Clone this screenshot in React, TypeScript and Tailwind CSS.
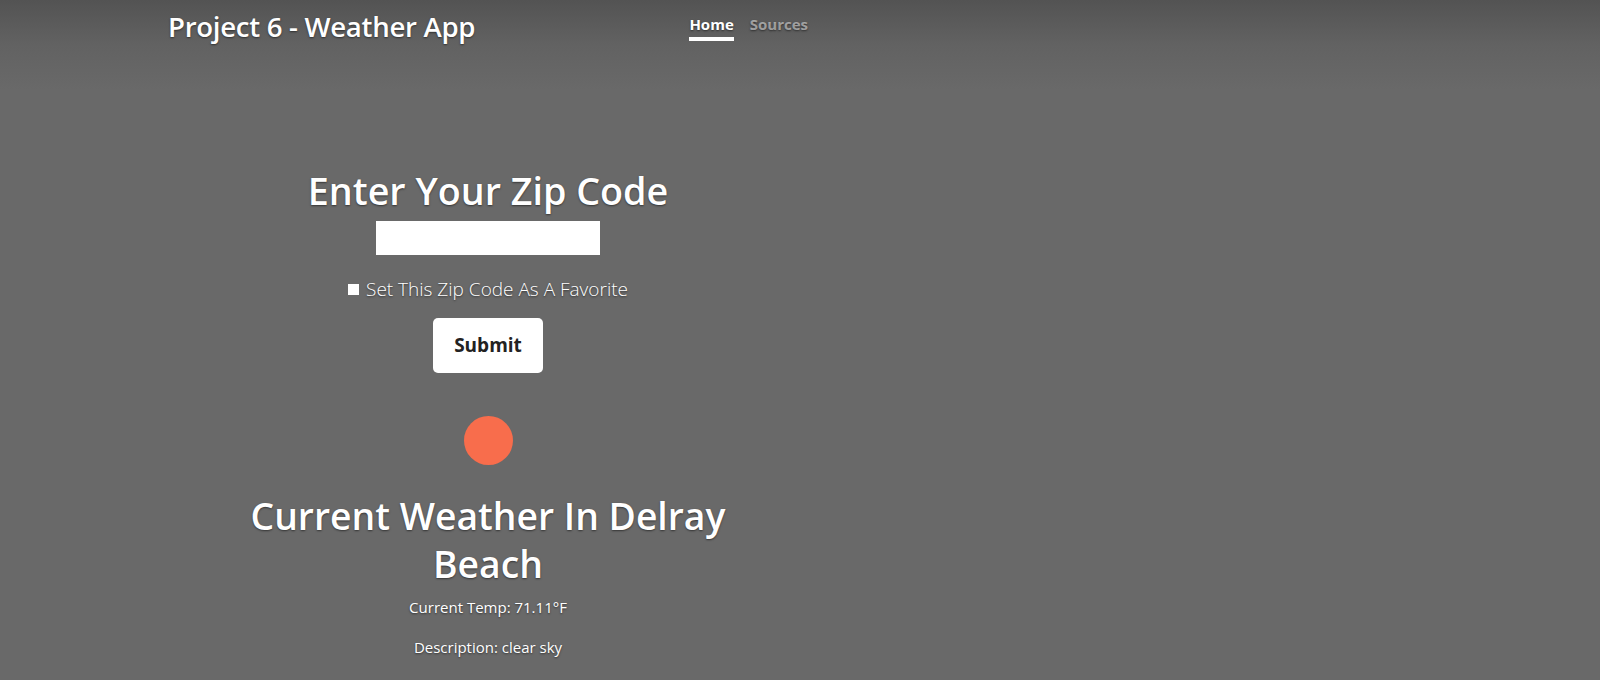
import { useState } from "react"

const shadow = "[text-shadow:0_1px_2px_rgba(0,0,0,0.5)]"

export default function App() {
  const [zip, setZip] = useState("")
  const [favorite, setFavorite] = useState(false)

  return (
    <div
      className={`min-h-screen w-full bg-[#696969] bg-[linear-gradient(to_bottom,#535353_0px,#626262_45px,#696969_90px,#696969_100%)] text-white font-['Open_Sans','Noto_Sans',sans-serif] ${shadow}`}
    >
      <div className="ml-[152px] w-[672px] px-4">
        {/* Masthead */}
        <header className="flex items-start justify-between pt-[9px]">
          <h3 className="text-[27.6px] leading-[34px] font-semibold tracking-[-0.3px]">Project 6 - Weather App</h3>
          <nav className="mt-[2px] flex gap-4 text-[15px] font-bold">
            <a className="border-b-4 border-white py-[2px] leading-[22px] text-white">Home</a>
            <a className="border-b-4 border-transparent py-[2px] leading-[22px] text-white/50">Sources</a>
          </nav>
        </header>

        {/* Main */}
        <main className="mt-[126px] flex flex-col items-center text-center">
          <h2 className="text-[37.7px] leading-[44px] font-semibold">Enter Your Zip Code</h2>
          <input
            value={zip}
            onChange={e => setZip(e.target.value)}
            className="mt-[8px] h-[34px] w-[224px] bg-white text-black outline-none px-2"
          />
          <label className="mt-[20px] flex items-center gap-[7px] text-[19px] leading-[28px] font-light">
            <input
              type="checkbox"
              checked={favorite}
              onChange={e => setFavorite(e.target.checked)}
              className="h-[11px] w-[11px] appearance-none bg-white"
            />
            Set This Zip Code As A Favorite
          </label>
          <button className="mt-[15px] h-[55px] w-[110px] rounded-[5px] bg-white text-[19px] font-bold text-[#222] [text-shadow:none]">
            Submit
          </button>

          <div className="mt-[43px] h-[49px] w-[49px] rounded-full bg-[#f86d4c]" />

          <h1 className="mt-[27px] max-w-[520px] text-[37.3px] leading-[48px] font-semibold">
            Current Weather In Delray Beach
          </h1>
          <p className="mt-[7px] text-[15px] leading-[24px]">Current Temp: 71.11°F</p>
          <p className="mt-[16px] text-[15px] leading-[24px]">Description: clear sky</p>
        </main>
      </div>
    </div>
  )
}
